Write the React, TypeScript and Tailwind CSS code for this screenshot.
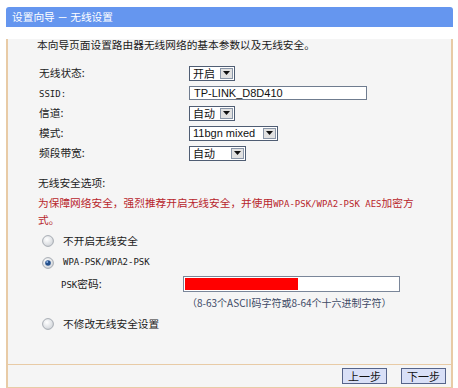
import React from 'react';

const mono = "font-['DejaVu_Sans_Mono',monospace] text-[9px]";

const Select = ({ label, width, arrow = 15, latin = false }: { label: string; width: number; arrow?: number; latin?: boolean }) => (
  <div
    className="flex h-[15px] items-stretch border border-[#4f5d73] bg-white"
    style={{ width }}
  >
    <span
      className={`flex-1 pl-[3px] leading-[13px] text-[#111] ${latin ? "font-['Liberation_Sans',sans-serif] text-[11px]" : 'text-[11px]'}`}
    >
      {label}
    </span>
    <span
      className="m-[1px] flex items-center justify-center border border-[#8a96a8] bg-[#e1e1e1]"
      style={{ width: arrow - 2 }}
    >
      <svg width="7" height="4" viewBox="0 0 7 4">
        <path d="M0 0h7L3.5 4z" fill="#111" />
      </svg>
    </span>
  </div>
);

const Radio = ({ checked = false }: { checked?: boolean }) => (
  <svg width="12" height="12" viewBox="0 0 12 12">
    <defs>
      <radialGradient id={checked ? 'rg1' : 'rg0'} cx="40%" cy="35%" r="70%">
        <stop offset="0%" stopColor="#ffffff" />
        <stop offset="100%" stopColor="#cfd3d8" />
      </radialGradient>
    </defs>
    <circle cx="6" cy="6" r="5.4" fill={`url(#${checked ? 'rg1' : 'rg0'})`} stroke="#9ea4ab" strokeWidth="0.9" />
    {checked && (
      <>
        <circle cx="6" cy="6" r="2.8" fill="#24508c" />
        <circle cx="5.2" cy="5.1" r="1" fill="#8fb4e6" />
      </>
    )}
  </svg>
);

const Row = ({ label, children }: { label: React.ReactNode; children: React.ReactNode }) => (
  <div className="flex h-5 items-center">
    <span className="w-[150px] text-[#222]">{label}</span>
    {children}
  </div>
);

export default function App() {
  return (
    <div className="min-h-screen bg-white pl-[6px] pt-[7px] font-['Noto_Sans_CJK_SC',sans-serif] text-[10.7px] text-[#1a1a1a]">
      <div className="w-[447px]">
        <div className="flex h-[20px] items-center rounded-t-[3px] bg-[#6596ef] pl-[6px] text-[10.7px] text-white">
          设置向导 － 无线设置
        </div>
        <div className="h-[325px] border-x-2 border-[#e8cba6] bg-[#f5f5f5]">
          <p className="ml-[29px] mt-[12px] leading-[12px]">本向导页面设置路由器无线网络的基本参数以及无线安全。</p>
          <div className="ml-[31px] mt-[12px]">
            <Row label="无线状态:">
              <Select label="开启" width={46} />
            </Row>
            <Row label={<span className={mono}>SSID:</span>}>
              <div className="flex h-[14px] w-[178px] items-center border border-[#6f7c8f] bg-white pl-[4px] font-['Liberation_Sans',sans-serif] text-[11px] text-[#111]">
                TP-LINK_D8D410
              </div>
            </Row>
            <Row label="信道:">
              <Select label="自动" width={46} />
            </Row>
            <Row label="模式:">
              <Select label="11bgn mixed" width={89} latin />
            </Row>
            <Row label="频段带宽:">
              <Select label="自动" width={57} />
            </Row>
          </div>
          <p className="ml-[30px] mt-[14px] leading-[12px] text-[#222]">无线安全选项:</p>
          <p className="ml-[30px] mt-[6px] leading-[16px] text-[#b8262c]">
            为保障网络安全，强烈推荐开启无线安全，并使用<span className={mono}>WPA-PSK/WPA2-PSK AES</span>加密方
            <br />
            式。
          </p>
          <div className="ml-[34px] mt-[5px] flex h-4 items-center gap-[9px]">
            <Radio />
            <span>不开启无线安全</span>
          </div>
          <div className="ml-[34px] mt-[6px] flex h-4 items-center gap-[9px]">
            <Radio checked />
            <span className={mono}>WPA-PSK/WPA2-PSK</span>
          </div>
          <div className="ml-[53px] mt-[5px] flex h-4 items-center">
            <span className="w-[122px]">
              <span className={mono}>PSK</span>密码:
            </span>
            <div className="flex h-4 w-[217px] items-stretch border border-[#7a8699] bg-white p-[1px]">
              <div className="w-[113px] bg-[#ff0000]" />
            </div>
          </div>
          <p className="ml-[179px] mt-[5px] leading-[12px] text-[10px] text-[#3d4a66]">
            （8-63个ASCII码字符或8-64个十六进制字符）
          </p>
          <div className="ml-[34px] mt-[7px] flex h-4 items-center gap-[9px]">
            <Radio />
            <span>不修改无线安全设置</span>
          </div>
        </div>
        <div className="flex h-[25px] justify-end gap-[14px] border-x-2 border-b-2 border-t border-[#e8cba6] bg-[#f5f5f5] pr-[5px] pt-[3px]">
          <button className="h-4 w-[45px] border border-[#56648a] bg-[#d9e0f7] text-[11px] leading-[14px] text-[#111]">
            上一步
          </button>
          <button className="h-4 w-[45px] border border-[#56648a] bg-[#d9e0f7] text-[11px] leading-[14px] text-[#111]">
            下一步
          </button>
        </div>
      </div>
    </div>
  );
}
